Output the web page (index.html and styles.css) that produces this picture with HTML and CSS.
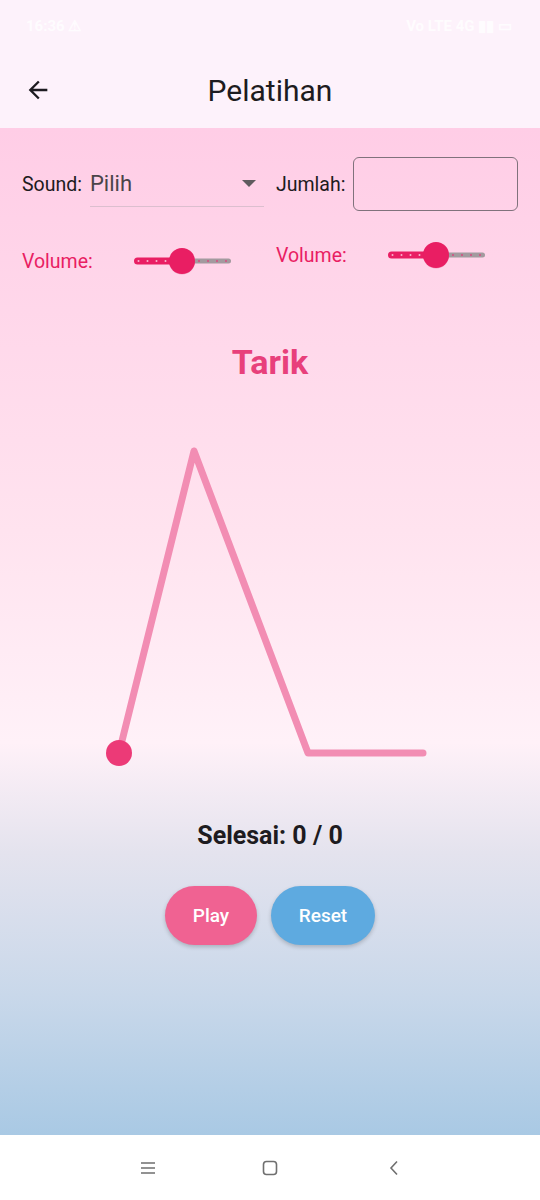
FILE: index.html
```html
<!DOCTYPE html>
<html lang="id">
<head>
<meta charset="utf-8">
<title>Pelatihan</title>
<link rel="stylesheet" href="styles.css">
</head>
<body>
<div class="screen">
  <div class="status">
    <span class="status-time">16:36 ⚠</span>
    <span class="status-right">Vo LTE 4G ▮▮ ▭</span>
  </div>
  <header class="appbar">
    <svg class="back" width="28" height="28" viewBox="0 0 24 24"><path d="M20 11H7.83l5.59-5.590L12 4l-8 8 8 8 1.41-1.41L7.830 13H20v-2z" fill="#1d1b20"/></svg>
    <h1 class="title">Pelatihan</h1>
  </header>
  <main class="main">
    <div class="controls">
      <div class="col col-left">
        <div class="field-row">
          <span class="label">Sound:</span>
          <div class="dropdown">
            <span class="dropdown-value">Pilih</span>
            <svg class="caret" width="14" height="8" viewBox="0 0 14 8"><path d="M0 0h14L7 7z" fill="#5f5a5e"/></svg>
          </div>
        </div>
        <div class="vol-row vol-left">
          <span class="vol-label">Volume:</span>
          <svg class="slider" width="100" height="30" viewBox="0 0 100 30">
            <rect x="0" y="11.5" width="50" height="7" rx="3.5" fill="#e91e63"/>
            <rect x="48" y="12.5" width="49" height="5" rx="2.5" fill="#a39a9f"/>
            <circle cx="4.5" cy="15" r="1" fill="#f7b5cf"/>
            <circle cx="13.5" cy="15" r="1" fill="#f7b5cf"/>
            <circle cx="22.5" cy="15" r="1" fill="#f7b5cf"/>
            <circle cx="31.5" cy="15" r="1" fill="#f7b5cf"/>
            <circle cx="65" cy="15" r="1" fill="#d9487f"/>
            <circle cx="74" cy="15" r="1" fill="#d9487f"/>
            <circle cx="83" cy="15" r="1" fill="#d9487f"/>
            <circle cx="92" cy="15" r="1" fill="#d9487f"/>
            <circle cx="48" cy="15.5" r="13" fill="#c4124f" opacity="0.25"/>
            <circle cx="48" cy="15" r="13" fill="#e91e63"/>
          </svg>
        </div>
      </div>
      <div class="col col-right">
        <div class="field-row">
          <span class="label">Jumlah:</span>
          <div class="textbox"></div>
        </div>
        <div class="vol-row vol-right">
          <span class="vol-label">Volume:</span>
          <svg class="slider" width="100" height="30" viewBox="0 0 100 30">
            <rect x="0" y="11.5" width="50" height="7" rx="3.5" fill="#e91e63"/>
            <rect x="48" y="12.5" width="49" height="5" rx="2.5" fill="#a39a9f"/>
            <circle cx="4.5" cy="15" r="1" fill="#f7b5cf"/>
            <circle cx="13.5" cy="15" r="1" fill="#f7b5cf"/>
            <circle cx="22.5" cy="15" r="1" fill="#f7b5cf"/>
            <circle cx="31.5" cy="15" r="1" fill="#f7b5cf"/>
            <circle cx="65" cy="15" r="1" fill="#d9487f"/>
            <circle cx="74" cy="15" r="1" fill="#d9487f"/>
            <circle cx="83" cy="15" r="1" fill="#d9487f"/>
            <circle cx="92" cy="15" r="1" fill="#d9487f"/>
            <circle cx="48" cy="15.5" r="13" fill="#c4124f" opacity="0.25"/>
            <circle cx="48" cy="15" r="13" fill="#e91e63"/>
          </svg>
        </div>
      </div>
    </div>

    <h2 class="phase">Tarik</h2>

    <svg class="chart" width="540" height="400" viewBox="0 0 540 400">
      <polyline points="119,371 194,69 308,371 423,371" fill="none" stroke="#f28db3" stroke-width="7" stroke-linejoin="round" stroke-linecap="round"/>
      <circle cx="119" cy="371" r="13" fill="#ec3a77"/>
    </svg>

    <p class="score">Selesai: 0 / 0</p>

    <div class="buttons">
      <button class="btn btn-play">Play</button>
      <button class="btn btn-reset">Reset</button>
    </div>
  </main>
  <nav class="navbar">
    <svg width="16" height="14" viewBox="0 0 16 14"><path d="M1 2h14M1 7h14M1 12h14" stroke="#6f6f6f" stroke-width="1.6" fill="none"/></svg>
    <svg width="16" height="16" viewBox="0 0 16 16"><rect x="1.5" y="1.5" width="13" height="13" rx="3" stroke="#6f6f6f" stroke-width="1.6" fill="none"/></svg>
    <svg width="12" height="16" viewBox="0 0 12 16"><path d="M9 1.5L3 8l6 6.5" stroke="#6f6f6f" stroke-width="1.6" fill="none"/></svg>
  </nav>
</div>
</body>
</html>
```

FILE: styles.css
```css
* { box-sizing: border-box; }
html, body { margin: 0; padding: 0; }
body {
  font-family: Roboto, "Noto Sans", "Liberation Sans", sans-serif;
  color: #1d1b20;
  background: #ffffff;
}
.screen {
  width: 540px;
  height: 1200px;
  display: flex;
  flex-direction: column;
  overflow: hidden;
}
.status {
  height: 52px;
  background: #fdf2fb;
  display: flex;
  justify-content: space-between;
  align-items: center;
  padding: 0 28px 0 26px;
  color: rgba(255,255,255,0.8);
  font-size: 15px;
  font-weight: 700;
}
.appbar {
  height: 76px;
  background: #fdf2fb;
  display: flex;
  align-items: center;
  padding-left: 24px;
}
.back { display: block; }
.title {
  flex: 1;
  margin: 0 0 0 -52px;
  text-align: center;
  font-size: 30px;
  font-weight: 400;
  color: #1d1b20;
}
.main {
  flex: 1;
  background: linear-gradient(180deg, #ffcde6 0%, #ffe3ef 40%, #fff1f8 61%, #e4e3ee 72%, #c9d8ea 86%, #a9c9e4 100%);
  padding: 29px 22px 0;
  display: flex;
  flex-direction: column;
  align-items: center;
}
.controls {
  width: 100%;
  display: grid;
  grid-template-columns: 242px 242px;
  column-gap: 12px;
}
.field-row {
  display: flex;
  align-items: center;
  height: 54px;
  gap: 8px;
}
.label {
  font-size: 19.5px;
  color: #1d1b20;
}
.dropdown {
  flex: 1;
  height: 46px;
  display: flex;
  align-items: center;
  justify-content: space-between;
  border-bottom: 1px solid #dcbfcf;
  padding-right: 8px;
}
.dropdown-value {
  font-size: 22px;
  color: #4a4449;
}
.caret { display: block; }
.textbox {
  flex: 1;
  height: 54px;
  border: 1.5px solid #80727c;
  border-radius: 6px;
}
.vol-row {
  display: flex;
  align-items: center;
  height: 30px;
}
.vol-left { margin-top: 35px; }
.vol-right { margin-top: 29px; }
.vol-label {
  width: 112px;
  font-size: 19.5px;
  color: #e91e63;
}
.slider { display: block; }
.phase {
  margin: 66px 0 0;
  height: 40px;
  line-height: 40px;
  font-size: 34px;
  font-weight: 700;
  color: #e8407b;
}
.chart {
  display: block;
  margin: 0 -22px;
  flex: none;
}
.score {
  margin: 39px 0 0;
  line-height: 30px;
  font-size: 25px;
  font-weight: 700;
  color: #1d1b20;
}
.buttons {
  display: flex;
  gap: 14px;
  margin-top: 35px;
}
.btn {
  height: 59px;
  border: none;
  border-radius: 30px;
  color: #ffffff;
  font-family: Roboto, "Noto Sans", sans-serif;
  font-size: 19px;
  font-weight: 500;
  box-shadow: 0 2px 4px rgba(0,0,0,0.2);
}
.btn-play { width: 92px; background: #f06292; }
.btn-reset { width: 104px; background: #5eaae0; }
.navbar {
  height: 65px;
  background: #ffffff;
  display: flex;
  align-items: center;
  justify-content: center;
}
.navbar svg { display: block; }
.navbar svg:nth-child(1) { margin-right: 106px; }
.navbar svg:nth-child(2) { margin-right: 110px; }
```
